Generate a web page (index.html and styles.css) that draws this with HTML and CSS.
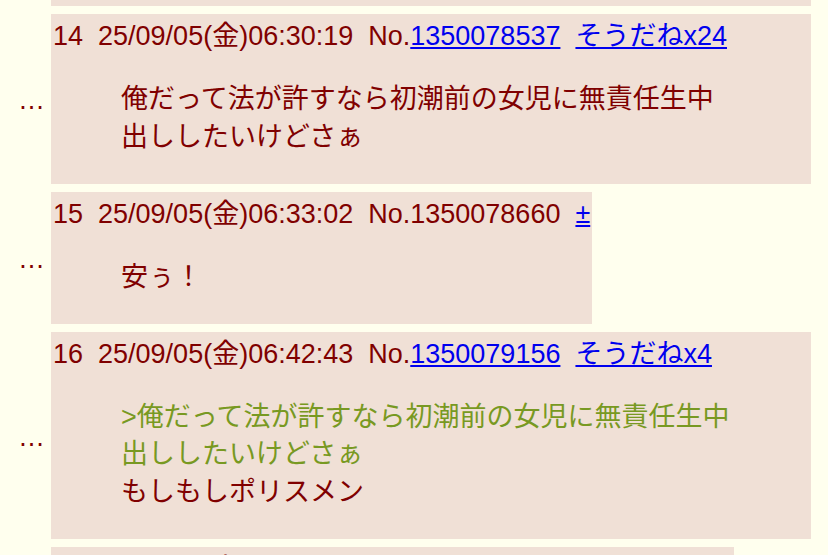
FILE: index.html
```html
<!DOCTYPE html>
<html lang="ja">
<head>
<meta charset="utf-8">
<title>スレッド</title>
<link rel="stylesheet" href="styles.css">
</head>
<body>
<div class="thread">
  <div class="row">
    <div class="rts"></div>
    <div class="rtd tail"></div>
  </div>

  <div class="row">
    <div class="rts">…</div>
    <div class="rtd">
      <div class="head"><span class="num">14</span><span class="date">25/09/05(金)06:30:19</span><span class="no">No.<a href="#">1350078537</a></span><a class="sod" href="#">そうだねx24</a></div>
      <blockquote>俺だって法が許すなら初潮前の女児に無責任生中出ししたいけどさぁ</blockquote>
    </div>
  </div>

  <div class="row">
    <div class="rts">…</div>
    <div class="rtd">
      <div class="head"><span class="num">15</span><span class="date">25/09/05(金)06:33:02</span><span class="no">No.1350078660</span><a class="sod" href="#">±</a></div>
      <blockquote>安ぅ！</blockquote>
    </div>
  </div>

  <div class="row">
    <div class="rts">…</div>
    <div class="rtd">
      <div class="head"><span class="num">16</span><span class="date">25/09/05(金)06:42:43</span><span class="no">No.<a href="#">1350079156</a></span><a class="sod" href="#">そうだねx4</a></div>
      <blockquote><span class="quote">&gt;俺だって法が許すなら初潮前の女児に無責任生中出ししたいけどさぁ</span><br>もしもしポリスメン</blockquote>
    </div>
  </div>

  <div class="row">
    <div class="rts">…</div>
    <div class="rtd">
      <div class="head"><span class="num">17</span><span class="date">25/09/05(金)06:45:12</span><span class="no">No.1350079320</span><a class="sod" href="#">±</a></div>
      <blockquote>はいポリスメンだけど署まで来てもらおうか</blockquote>
    </div>
  </div>
</div>
</body>
</html>
```

FILE: styles.css
```css
html, body {
  margin: 0;
  padding: 0;
  background: #ffffee;
}

body {
  font-family: "Liberation Sans", "Noto Sans CJK JP", sans-serif;
  font-size: 27px;
  line-height: 36px;
  color: #800000;
  overflow: hidden;
}

.thread {
  display: flex;
  flex-direction: column;
  gap: 8px;
  padding-right: 17px;
}

.row {
  display: flex;
  align-items: center;
}

.rts {
  flex: 0 0 51px;
  box-sizing: border-box;
  padding-right: 6px;
  padding-top: 3px;
  text-align: right;
}

.rtd {
  flex: 0 1 auto;
  min-width: 0;
  background: #f0e0d6;
  padding: 4px 2px 2px 2px;
}

.rtd.tail {
  flex: 1 1 auto;
  height: 6px;
  padding: 0;
}

.head {
  white-space: nowrap;
  line-height: 36px;
}

.head > * + * {
  margin-left: 15px;
}

a {
  color: #0000ee;
  text-decoration: underline;
}

blockquote {
  margin: 27px 72px 25.5px 68px;
  line-height: 37.5px;
}

.quote {
  color: #789922;
}
```
